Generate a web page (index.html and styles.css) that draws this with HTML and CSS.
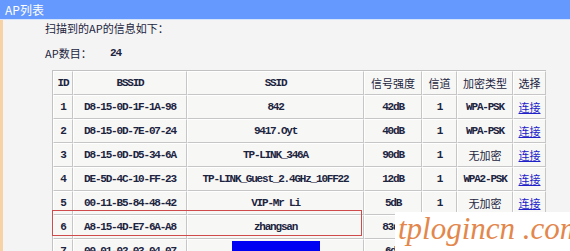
FILE: index.html
```html
<!DOCTYPE html>
<html>
<head>
<meta charset="utf-8">
<link rel="stylesheet" href="styles.css">
</head>
<body>
<div class="titlebar">AP列表</div>
<div class="titleline"></div>
<div class="panel">
  <div class="intro">扫描到的AP的信息如下：</div>
  <div class="count"><span class="count-label">AP数目：</span><span class="mono count-num">24</span></div>
  <div class="table-wrap">
    <table class="ap-table">
      <colgroup>
        <col style="width:20px"><col style="width:114px"><col style="width:177px"><col style="width:58px"><col style="width:35px"><col style="width:56px"><col style="width:33px">
      </colgroup>
      <thead>
        <tr><th class="mono">ID</th><th class="mono">BSSID</th><th class="mono">SSID</th><th>信号强度</th><th>信道</th><th>加密类型</th><th>选择</th></tr>
      </thead>
      <tbody>
        <tr><td class="mono">1</td><td class="mono">D8-15-0D-1F-1A-98</td><td class="mono">842</td><td class="mono">42dB</td><td class="mono">1</td><td class="mono">WPA-PSK</td><td><a href="#">连接</a></td></tr>
        <tr><td class="mono">2</td><td class="mono">D8-15-0D-7E-07-24</td><td class="mono">9417.Oyt</td><td class="mono">40dB</td><td class="mono">1</td><td class="mono">WPA-PSK</td><td><a href="#">连接</a></td></tr>
        <tr><td class="mono">3</td><td class="mono">D8-15-0D-D5-34-6A</td><td class="mono">TP-LINK_346A</td><td class="mono">90dB</td><td class="mono">1</td><td>无加密</td><td><a href="#">连接</a></td></tr>
        <tr><td class="mono">4</td><td class="mono">DE-5D-4C-10-FF-23</td><td class="mono">TP-LINK_Guest_2.4GHz_10FF22</td><td class="mono">12dB</td><td class="mono">1</td><td class="mono">WPA2-PSK</td><td><a href="#">连接</a></td></tr>
        <tr><td class="mono">5</td><td class="mono">00-11-B5-84-48-42</td><td class="mono">VIP-Mr Li</td><td class="mono">5dB</td><td class="mono">1</td><td>无加密</td><td><a href="#">连接</a></td></tr>
        <tr><td class="mono">6</td><td class="mono">A8-15-4D-E7-6A-A8</td><td class="mono">zhangsan</td><td class="mono">83dB</td><td class="mono">1</td><td>无加密</td><td><a href="#">连接</a></td></tr>
        <tr><td class="mono">7</td><td class="mono">00-01-02-03-04-07</td><td><span class="redact"></span></td><td class="mono">6dB</td><td class="mono">1</td><td>无加密</td><td><a href="#">连接</a></td></tr>
      </tbody>
    </table>
    <div class="highlight"></div>
  </div>
</div>
<div class="watermark">tplogincn .com</div>
</body>
</html>
```

FILE: styles.css
```css
html, body {
  margin: 0;
  padding: 0;
  background: #f4f4f4;
  height: 251px;
  overflow: hidden;
}
body {
  position: relative;
  font-family: "Noto Sans CJK SC", sans-serif;
  font-size: 11px;
  color: #1c2440;
}
.titlebar {
  height: 19px;
  line-height: 19px;
  background: #6699fe;
  color: #ffffff;
  font-size: 12px;
  padding-left: 5px;
}
.titleline {
  height: 1px;
  background: #d6e4fb;
}
.panel {
  border-left: 3px solid #f6d2a4;
  padding-left: 42px;
  height: 231px;
  box-sizing: border-box;
}
.mono {
  font-family: "Liberation Mono", "Noto Sans CJK SC", monospace;
  letter-spacing: -1.2px;
  font-weight: bold;
}
.intro {
  height: 16px;
  line-height: 16px;
}
.count {
  margin-top: 9px;
  height: 16px;
  line-height: 16px;
  display: flex;
}
.count-label {
  width: 65px;
}
.table-wrap {
  position: relative;
  margin-top: 9px;
  margin-left: 7px;
  width: 493px;
}
.ap-table {
  table-layout: fixed;
  border-collapse: separate;
  border-spacing: 0;
  width: 493px;
  border-top: 1px solid #c2c2c2;
  border-left: 1px solid #c2c2c2;
}
.ap-table th, .ap-table td {
  height: 22px;
  padding: 0;
  text-align: center;
  font-weight: normal;
  background: #f7f7f6;
  border-right: 1px solid #c6c6c6;
  border-bottom: 1px solid #c6c6c6;
  border-left: 1px solid #ffffff;
  border-top: 1px solid #ffffff;
  white-space: nowrap;
  overflow: hidden;
}
.ap-table th.mono, .ap-table td.mono {
  font-weight: bold;
}
.ap-table a {
  color: #2020c8;
  text-decoration: underline;
}
.redact {
  display: inline-block;
  width: 88px;
  height: 20px;
  background: #0000f2;
  vertical-align: middle;
}
.highlight {
  position: absolute;
  left: 0;
  top: 140px;
  width: 308px;
  height: 24px;
  border: 1px solid #cf4a4a;
  pointer-events: none;
}
.watermark {
  position: absolute;
  left: 395px;
  top: 212px;
  width: 175px;
  height: 40px;
  background: #ffffff;
  color: #e3874c;
  font-family: "Liberation Serif", serif;
  font-style: italic;
  font-size: 31px;
  line-height: 34px;
  padding-left: 3px;
  box-sizing: border-box;
  white-space: nowrap;
}
```
